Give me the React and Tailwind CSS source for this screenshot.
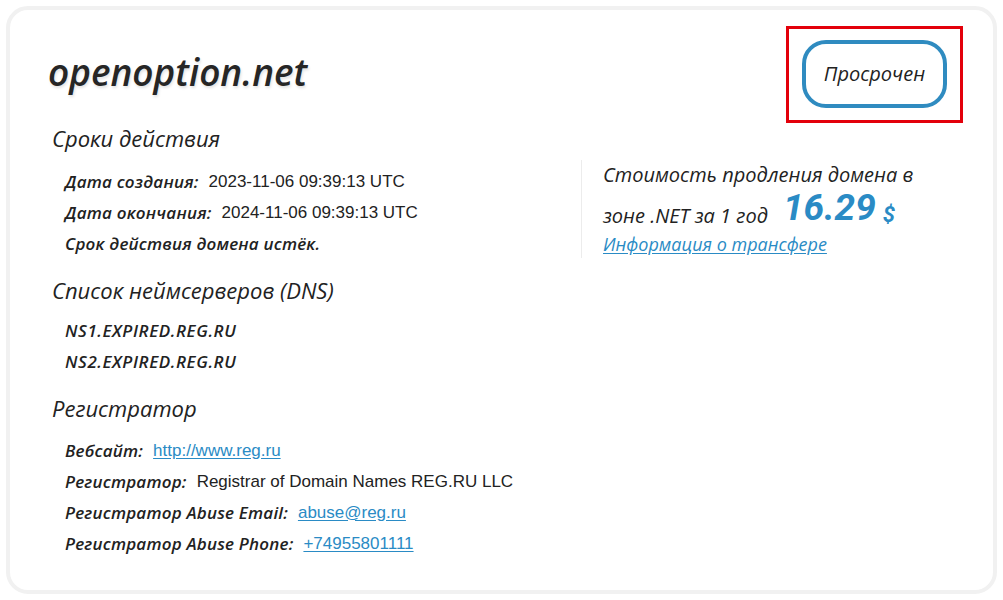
const head = { fontFamily: '"Open Sans", "Noto Sans", sans-serif' };
const din = { fontFamily: 'Roboto, "Noto Sans", sans-serif' };
const plain = { fontFamily: '"Liberation Sans", Arial, sans-serif' };

function Row({ label, children }) {
  return (
    <div className="h-[31px] flex items-center pl-[13px] text-[17px] text-[#222]">
      <span className="italic font-semibold tracking-[0.2px]" style={head}>{label}</span>
      <span className="ml-[10px]" style={plain}>{children}</span>
    </div>
  );
}

function Link({ children }) {
  return <a href="#" className="text-[#2a8bc5] underline underline-offset-2">{children}</a>;
}

function Heading({ children, className = '' }) {
  return (
    <h2 className={`h-8 flex items-center italic text-[22px] text-[#222] ${className}`} style={head}>
      {children}
    </h2>
  );
}

export default function App() {
  return (
    <div className="w-[1003px] h-[600px] bg-white p-[6px]">
      <div className="h-[588px] border-4 border-[#f1f1f1] rounded-[22px] pl-[38px] pr-[30px]">
        <div className="mt-[16px] h-[96px] flex items-center justify-between">
          <h1
            className="-mt-[4px] italic font-semibold text-[37px] text-[#262626] [text-shadow:1px_2px_3px_rgba(0,0,0,0.12)]"
            style={head}
          >
            openoption.net
          </h1>
          <div className="w-[177px] h-[97px] border-[3px] border-[#e3000b] flex items-center justify-center">
            <div
              className="w-[145px] h-[68px] border-[4px] border-[#2f8bc0] rounded-[24px] flex items-center justify-center italic text-[20px] text-[#222]"
              style={head}
            >
              Просрочен
            </div>
          </div>
        </div>

        <div className="flex">
          <div className="w-[533px] pl-[4px]">
            <Heading>Сроки действия</Heading>
            <div className="mt-[12px]">
              <Row label="Дата создания:">2023-11-06 09:39:13 UTC</Row>
              <Row label="Дата окончания:">2024-11-06 09:39:13 UTC</Row>
              <div className="h-[31px] flex items-center pl-[13px] text-[17px] text-[#222] italic font-semibold tracking-[0.2px]" style={head}>
                Срок действия домена истёк.
              </div>
            </div>

            <Heading className="mt-[15px]">Список неймсерверов (DNS)</Heading>
            <div className="mt-[9px] pl-[13px] text-[17px] text-[#222] italic font-semibold tracking-[0.6px]" style={head}>
              <div className="h-[31px] flex items-center">NS1.EXPIRED.REG.RU</div>
              <div className="h-[31px] flex items-center">NS2.EXPIRED.REG.RU</div>
            </div>

            <Heading className="mt-[15px]">Регистратор</Heading>
            <div className="mt-[11px]">
              <Row label="Вебсайт:"><Link>http://www.reg.ru</Link></Row>
              <Row label="Регистратор:">Registrar of Domain Names REG.RU LLC</Row>
              <Row label="Регистратор Abuse Email:"><Link>abuse@reg.ru</Link></Row>
              <Row label="Регистратор Abuse Phone:"><Link>+74955801111</Link></Row>
            </div>
          </div>

          <div className="mt-[38px] h-[98px] border-l border-[#ececec] pl-[21px] italic text-[20px] text-[#222]" style={head}>
            <div className="h-[30px] flex items-center">Стоимость продления домена в</div>
            <div className="h-[40px] flex items-end leading-none pb-[4px]">
              <span>зоне .NET за 1 год</span>
              <span className="ml-[15px] text-[37px] font-bold text-[#2a8bc5]" style={din}>16.29</span>
              <span className="ml-[7px] text-[22px] font-bold text-[#2a8bc5]" style={din}>$</span>
            </div>
            <div className="h-[28px] flex items-center text-[18px] font-medium">
              <Link>Информация о трансфере</Link>
            </div>
          </div>
        </div>
      </div>
    </div>
  );
}
